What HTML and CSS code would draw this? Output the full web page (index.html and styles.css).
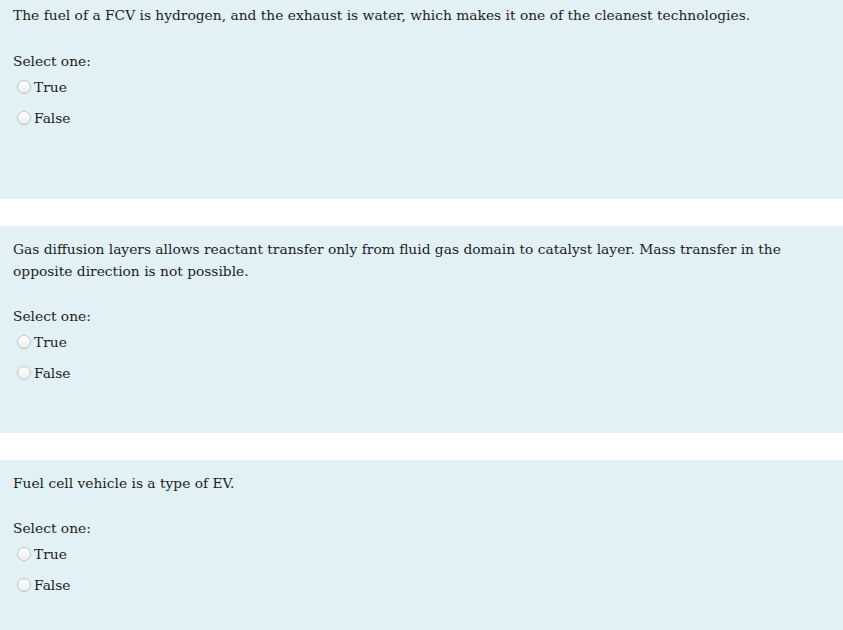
FILE: index.html
```html
<!DOCTYPE html>
<html>
<head>
<meta charset="utf-8">
<link rel="stylesheet" href="styles.css">
</head>
<body>
<div class="que que-first">
  <div class="qtext">The fuel of a FCV is hydrogen, and the exhaust is water, which makes it one of the cleanest technologies.</div>
  <div class="prompt">Select one:</div>
  <div class="answer">
    <label class="opt"><span class="radio"></span>True</label>
    <label class="opt"><span class="radio"></span>False</label>
  </div>
</div>
<div class="que">
  <div class="qtext">Gas diffusion layers allows reactant transfer only from fluid gas domain to catalyst layer. Mass transfer in the opposite direction is not possible.</div>
  <div class="prompt">Select one:</div>
  <div class="answer">
    <label class="opt"><span class="radio"></span>True</label>
    <label class="opt"><span class="radio"></span>False</label>
  </div>
</div>
<div class="que">
  <div class="qtext">Fuel cell vehicle is a type of EV.</div>
  <div class="prompt">Select one:</div>
  <div class="answer">
    <label class="opt"><span class="radio"></span>True</label>
    <label class="opt"><span class="radio"></span>False</label>
  </div>
</div>
</body>
</html>
```
FILE: styles.css
```css
html, body {
  margin: 0;
  padding: 0;
  background: #ffffff;
}
body {
  font-family: "DejaVu Serif", serif;
  font-size: 13.8px;
  color: #1a1e22;
  display: flex;
  flex-direction: column;
  gap: 27px;
}
.que {
  background: #e2f1f6;
  padding: 12px 13px 49px;
}
.que-first {
  padding-top: 4px;
  padding-bottom: 70px;
}
.qtext {
  line-height: 22px;
  padding-right: 40px;
}
.prompt {
  line-height: 22px;
  margin-top: 23px;
}
.que-first .prompt {
  margin-top: 24px;
}
.answer {
  display: flex;
  flex-direction: column;
  gap: 9px;
  margin-top: 4px;
}
.opt {
  display: flex;
  align-items: center;
  line-height: 22px;
  padding-left: 4px;
}
.radio {
  width: 12px;
  height: 12px;
  border-radius: 50%;
  border: 1px solid #bfc3c6;
  background: linear-gradient(#ffffff, #eceeef);
  margin-right: 3px;
  box-sizing: content-box;
}
```
